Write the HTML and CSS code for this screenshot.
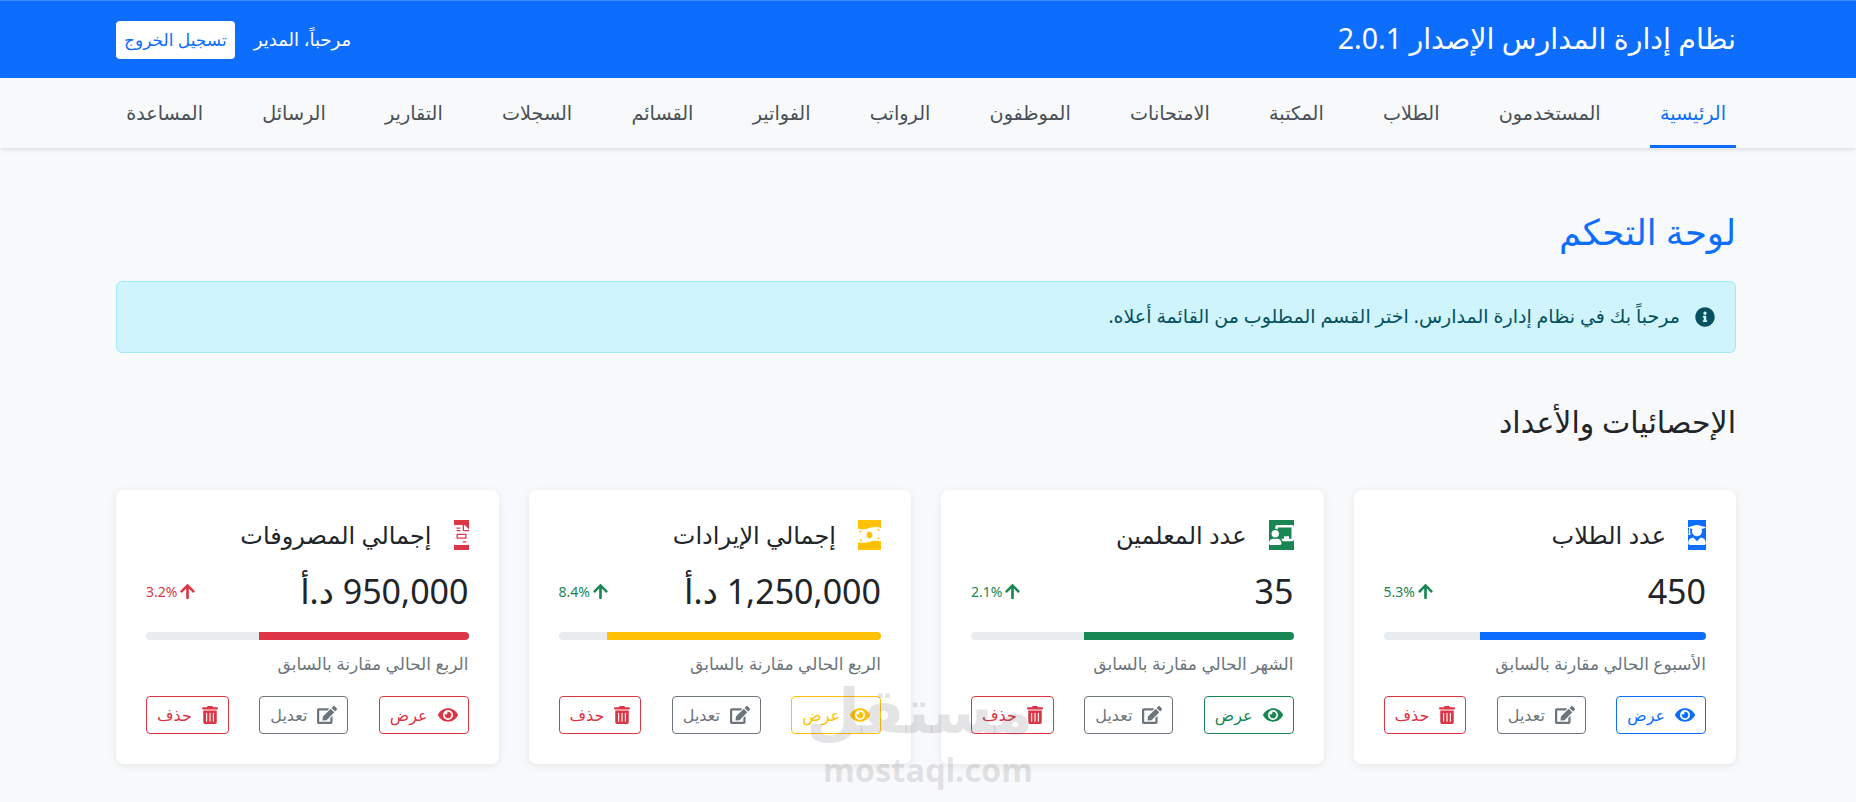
FILE: index.html
```html
<!doctype html>
<html lang="ar" dir="rtl">
  <head>
    <meta charset="UTF-8" />
    <meta name="viewport" content="width=device-width, initial-scale=1.0" />
    <title>نظام إدارة المدارس</title>
    <link rel="stylesheet" href="styles.css">
  </head>
  <body>
    <svg class="sprite" aria-hidden="true">
      <symbol id="i-eye" viewBox="0 0 576 512"><path d="M572.52 241.4C518.29 135.59 410.93 64 288 64S57.68 135.64 3.48 241.41a32.35 32.35 0 0 0 0 29.19C57.71 376.41 165.07 448 288 448s230.32-71.64 284.52-177.41a32.35 32.35 0 0 0 0-29.19zM288 400a144 144 0 1 1 144-144 143.93 143.93 0 0 1-144 144zm0-240a95.31 95.31 0 0 0-25.31 3.79 47.85 47.85 0 0 1-66.9 66.9A95.78 95.78 0 1 0 288 160z"/></symbol>
      <symbol id="i-edit" viewBox="0 0 576 512"><path d="M402.6 83.2l90.2 90.2c3.8 3.8 3.8 10 0 13.8L274.4 405.6l-92.8 10.3c-12.4 1.4-22.9-9.1-21.5-21.5l10.3-92.8L388.8 83.2c3.8-3.8 10-3.8 13.8 0zm162-22.9l-48.8-48.8c-15.2-15.2-39.9-15.2-55.2 0l-35.4 35.4c-3.8 3.8-3.8 10 0 13.8l90.2 90.2c3.8 3.8 10 3.8 13.8 0l35.4-35.4c15.2-15.3 15.2-40 0-55.2zM384 346.2V448H64V128h229.8c3.2 0 6.2-1.3 8.5-3.5l40-40c7.6-7.6 2.2-20.5-8.5-20.5H48C21.5 64 0 85.5 0 112v352c0 26.5 21.5 48 48 48h352c26.5 0 48-21.5 48-48V306.2c0-10.7-12.9-16-20.5-8.5l-40 40c-2.2 2.3-3.5 5.3-3.5 8.5z"/></symbol>
      <symbol id="i-trash" viewBox="0 0 448 512"><path d="M32 464a48 48 0 0 0 48 48h288a48 48 0 0 0 48-48V128H32zm272-256a16 16 0 0 1 32 0v224a16 16 0 0 1-32 0zm-96 0a16 16 0 0 1 32 0v224a16 16 0 0 1-32 0zm-96 0a16 16 0 0 1 32 0v224a16 16 0 0 1-32 0zM432 32H312l-9.4-18.7A24 24 0 0 0 281.1 0H166.8a23.72 23.72 0 0 0-21.4 13.3L136 32H16A16 16 0 0 0 0 48v32a16 16 0 0 0 16 16h416a16 16 0 0 0 16-16V48a16 16 0 0 0-16-16z"/></symbol>
      <symbol id="i-info" viewBox="0 0 512 512"><path d="M256 8C119.043 8 8 119.083 8 256c0 136.997 111.043 248 248 248s248-111.003 248-248C504 119.083 392.957 8 256 8zm0 110c23.196 0 42 18.804 42 42s-18.804 42-42 42-42-18.804-42-42 18.804-42 42-42zm56 254c0 6.627-5.373 12-12 12h-88c-6.627 0-12-5.373-12-12v-24c0-6.627 5.373-12 12-12h12v-64h-12c-6.627 0-12-5.373-12-12v-24c0-6.627 5.373-12 12-12h64c6.627 0 12 5.373 12 12v100h12c6.627 0 12 5.373 12 12v24z"/></symbol>
      <symbol id="i-up" viewBox="0 0 448 512"><path d="M34.9 289.5l-22.2-22.2c-9.4-9.4-9.4-24.6 0-33.9L207 39c9.4-9.4 24.6-9.4 33.9 0l194.3 194.3c9.4 9.4 9.4 24.6 0 33.9L413 289.4c-9.5 9.5-25 9.3-34.3-.4L264 168.6V456c0 13.3-10.7 24-24 24h-32c-13.3 0-24-10.7-24-24V168.6L69.2 289.1c-9.3 9.8-24.8 10-34.3.4z"/></symbol>
      <symbol id="i-student" viewBox="0 0 448 512"><path d="M319.4 320.6L224 416l-95.4-95.4C57.1 323.7 0 382.2 0 454.4v9.6c0 26.5 21.5 48 48 48h352c26.5 0 48-21.5 48-48v-9.6c0-72.2-57.1-130.7-128.6-133.8zM13.6 79.8l6.4 1.5v58.4c-7 4.2-12 11.5-12 20.3 0 8.4 4.6 15.4 11.1 19.7L3.5 242c-1.7 6.9 2.1 14 7.6 14h41.8c5.5 0 9.3-7.1 7.6-14l-15.6-62.3C51.4 175.4 56 168.4 56 160c0-8.8-5-16.1-12-20.3V87.1l66 15.9c-8.6 17.2-14 36.4-14 57 0 70.7 57.3 128 128 128s128-57.3 128-128c0-20.6-5.3-39.8-14-57l96.3-23.2c18.2-4.4 18.2-27.1 0-31.5l-190.4-46c-13-3.1-26.7-3.1-39.7 0L13.6 48.2c-18.1 4.4-18.1 27.2 0 31.6z"/></symbol>
      <symbol id="i-teacher" viewBox="0 0 640 512"><path d="M208 352c-2.39 0-4.78.35-7.06 1.09C187.98 357.3 174.35 360 160 360c-14.35 0-27.98-2.7-40.95-6.91-2.28-.74-4.66-1.09-7.05-1.09C49.94 352-.33 402.48 0 464.62.14 490.88 21.73 512 48 512h224c26.27 0 47.86-21.12 48-47.38.33-62.14-49.94-112.62-112-112.62zm-48-32c53.02 0 96-42.98 96-96s-42.98-96-96-96-96 42.98-96 96 42.98 96 96 96zM592 0H208c-26.47 0-48 22.25-48 49.59V96c23.42 0 45.1 6.78 64 17.8V64h352v288h-64v-64H384v64h-76.24c19.1 16.69 33.12 38.73 39.69 64H592c26.47 0 48-22.25 48-49.59V49.59C640 22.25 618.47 0 592 0z"/></symbol>
      <symbol id="i-money" viewBox="0 0 640 512"><path d="M621.16 54.46C582.37 38.19 543.55 32 504.75 32c-123.17-.01-246.33 62.34-369.5 62.34-30.89 0-61.76-3.92-92.65-13.72-3.47-1.1-6.95-1.62-10.35-1.62C15.04 79 0 92.32 0 110.81v317.26c0 12.63 7.23 24.6 18.84 29.46C57.63 473.81 96.45 480 135.25 480c123.17 0 246.34-62.35 369.51-62.35 30.89 0 61.76 3.92 92.65 13.72 3.47 1.1 6.95 1.62 10.35 1.62 17.21 0 32.25-13.32 32.25-31.81V83.93c-.01-12.64-7.24-24.6-18.85-29.47zM48 132.22c20.12 5.04 41.12 7.57 62.72 8.93C104.84 170.54 79 192.69 48 192.69v-60.47zm0 285v-47.78c34.37 0 62.18 27.27 63.71 61.4-22.53-1.81-43.59-6.31-63.71-13.62zM320 352c-44.19 0-80-42.99-80-96 0-53.02 35.82-96 80-96s80 42.98 80 96c0 53.03-35.83 96-80 96zm272 27.78c-17.52-4.39-35.71-6.85-54.32-8.44 5.87-26.08 27.5-45.88 54.32-49.28v57.72zm0-236.11c-30.89-3.91-54.86-29.7-55.81-61.55 19.54 2.17 38.09 6.23 55.81 12.66v48.89z"/></symbol>
      <symbol id="i-invoice" viewBox="0 0 384 512"><path d="M288 256H96v64h192v-64zm89-151L279.1 7c-4.5-4.5-10.6-7-17-7H256v128h128v-6.1c0-6.3-2.5-12.4-7-16.9zm-153 31V0H24C10.7 0 0 10.7 0 24v464c0 13.3 10.7 24 24 24h336c13.3 0 24-10.7 24-24V160H248c-13.2 0-24-10.8-24-24zM64 72c0-4.42 3.58-8 8-8h80c4.42 0 8 3.58 8 8v16c0 4.42-3.58 8-8 8H72c-4.42 0-8-3.58-8-8V72zm0 64c0-4.42 3.58-8 8-8h80c4.42 0 8 3.58 8 8v16c0 4.42-3.58 8-8 8H72c-4.42 0-8-3.58-8-8v-16zm256 304c0 4.42-3.58 8-8 8h-80c-4.42 0-8-3.58-8-8v-16c0-4.42 3.58-8 8-8h80c4.42 0 8 3.58 8 8v16zm0-200v96c0 8.84-7.16 16-16 16H80c-8.84 0-16-7.16-16-16v-96c0-8.84 7.16-16 16-16h224c8.84 0 16 7.16 16 16z"/></symbol>
    </svg>

    <header class="topbar">
      <div class="container topbar-row">
        <div class="brand">نظام إدارة المدارس الإصدار 2.0.1</div>
        <div class="user-box">
          <span>مرحباً، المدير</span>
          <a class="logout" href="#">تسجيل الخروج</a>
        </div>
      </div>
    </header>

    <nav class="mainnav">
      <div class="container nav-row">
        <a class="nav-item active" href="#">الرئيسية</a>
        <a class="nav-item" href="#">المستخدمون</a>
        <a class="nav-item" href="#">الطلاب</a>
        <a class="nav-item" href="#">المكتبة</a>
        <a class="nav-item" href="#">الامتحانات</a>
        <a class="nav-item" href="#">الموظفون</a>
        <a class="nav-item" href="#">الرواتب</a>
        <a class="nav-item" href="#">الفواتير</a>
        <a class="nav-item" href="#">القسائم</a>
        <a class="nav-item" href="#">السجلات</a>
        <a class="nav-item" href="#">التقارير</a>
        <a class="nav-item" href="#">الرسائل</a>
        <a class="nav-item" href="#">المساعدة</a>
      </div>
    </nav>

    <main class="container content">
      <h1 class="page-title">لوحة التحكم</h1>

      <div class="alert">
        <svg class="alert-icon"><use href="#i-info"/></svg>
        <span>مرحباً بك في نظام إدارة المدارس. اختر القسم المطلوب من القائمة أعلاه.</span>
      </div>

      <h2 class="section-title">الإحصائيات والأعداد</h2>

      <div class="cards">
        <section class="card blue">
          <div class="card-head">
            <span class="card-icon w18"><svg><use href="#i-student"/></svg></span>
            <h3>عدد الطلاب</h3>
          </div>
          <div class="value-row">
            <div class="value">450</div>
            <div class="trend up">
              <svg><use href="#i-up"/></svg>
              <span>5.3%</span>
            </div>
          </div>
          <div class="progress"><div class="progress-bar" style="width: 70%"></div></div>
          <p class="caption">الأسبوع الحالي مقارنة بالسابق</p>
          <div class="actions">
            <a class="btn btn-view" href="#"><svg><use href="#i-eye"/></svg>عرض</a>
            <a class="btn btn-edit" href="#"><svg><use href="#i-edit"/></svg>تعديل</a>
            <a class="btn btn-delete" href="#"><svg class="narrow"><use href="#i-trash"/></svg>حذف</a>
          </div>
        </section>

        <section class="card green">
          <div class="card-head">
            <span class="card-icon w25"><svg><use href="#i-teacher"/></svg></span>
            <h3>عدد المعلمين</h3>
          </div>
          <div class="value-row">
            <div class="value">35</div>
            <div class="trend up">
              <svg><use href="#i-up"/></svg>
              <span>2.1%</span>
            </div>
          </div>
          <div class="progress"><div class="progress-bar" style="width: 65%"></div></div>
          <p class="caption">الشهر الحالي مقارنة بالسابق</p>
          <div class="actions">
            <a class="btn btn-view" href="#"><svg><use href="#i-eye"/></svg>عرض</a>
            <a class="btn btn-edit" href="#"><svg><use href="#i-edit"/></svg>تعديل</a>
            <a class="btn btn-delete" href="#"><svg class="narrow"><use href="#i-trash"/></svg>حذف</a>
          </div>
        </section>

        <section class="card yellow">
          <div class="card-head">
            <span class="card-icon w23"><svg><use href="#i-money"/></svg></span>
            <h3>إجمالي الإيرادات</h3>
          </div>
          <div class="value-row">
            <div class="value">1,250,000 د.أ</div>
            <div class="trend up">
              <svg><use href="#i-up"/></svg>
              <span>8.4%</span>
            </div>
          </div>
          <div class="progress"><div class="progress-bar" style="width: 85%"></div></div>
          <p class="caption">الربع الحالي مقارنة بالسابق</p>
          <div class="actions">
            <a class="btn btn-view" href="#"><svg><use href="#i-eye"/></svg>عرض</a>
            <a class="btn btn-edit" href="#"><svg><use href="#i-edit"/></svg>تعديل</a>
            <a class="btn btn-delete" href="#"><svg class="narrow"><use href="#i-trash"/></svg>حذف</a>
          </div>
        </section>

        <section class="card red">
          <div class="card-head">
            <span class="card-icon w15"><svg><use href="#i-invoice"/></svg></span>
            <h3>إجمالي المصروفات</h3>
          </div>
          <div class="value-row">
            <div class="value">950,000 د.أ</div>
            <div class="trend down">
              <svg><use href="#i-up"/></svg>
              <span>3.2%</span>
            </div>
          </div>
          <div class="progress"><div class="progress-bar" style="width: 65%"></div></div>
          <p class="caption">الربع الحالي مقارنة بالسابق</p>
          <div class="actions">
            <a class="btn btn-view" href="#"><svg><use href="#i-eye"/></svg>عرض</a>
            <a class="btn btn-edit" href="#"><svg><use href="#i-edit"/></svg>تعديل</a>
            <a class="btn btn-delete" href="#"><svg class="narrow"><use href="#i-trash"/></svg>حذف</a>
          </div>
        </section>
      </div>
    </main>

    <div class="watermark">
      <div class="wm-ar">مستقل</div>
      <div class="wm-en">mostaql.com</div>
    </div>
  </body>
</html>
```

FILE: styles.css
```css
* {
  box-sizing: border-box;
}
body {
  font-family: "Noto Sans", "DejaVu Sans", sans-serif;
  margin: 0;
  background-color: #f8f9fa;
  color: #212529;
  font-size: 16px;
  line-height: 1.5;
  overflow: hidden;
  height: 802px;
  position: relative;
}
a {
  text-decoration: none;
}
.sprite {
  display: none;
}
.container {
  width: 1620px;
  margin: 0 120px 0 116px;
}

/* top bar */
.topbar {
  background: #0d6efd;
  border-top: 1px solid #3d8bfd;
  height: 78px;
  color: white;
}
.topbar-row {
  display: flex;
  justify-content: space-between;
  align-items: center;
  height: 77px;
}
.brand {
  font-size: 28.5px;
  padding-bottom: 2px;
}
.user-box {
  display: flex;
  align-items: center;
  gap: 19px;
  font-size: 18px;
}
.logout {
  background: white;
  color: #0d6efd;
  border-radius: 4px;
  font-size: 17px;
  height: 38px;
  padding: 0 8px;
  display: flex;
  align-items: center;
}

/* nav */
.mainnav {
  background: #f8f9fa;
  height: 70px;
  box-shadow: 0 2px 4px rgba(0, 0, 0, 0.1);
}
.nav-row {
  display: flex;
  justify-content: space-between;
  height: 70px;
}
.nav-item {
  color: #495057;
  font-size: 19.2px;
  padding: 3px 10px 0;
  display: flex;
  align-items: center;
  border-bottom: 3px solid transparent;
}
.nav-item.active {
  color: #0d6efd;
  border-bottom-color: #0d6efd;
}

/* page */
.content {
  padding-top: 62px;
}
.page-title {
  color: #0d6efd;
  font-size: 35.5px;
  font-weight: 400;
  line-height: 1.2;
  margin: 0 0 28px;
}
.alert {
  background: #cff4fc;
  border: 1px solid #9eeaf9;
  border-radius: 6px;
  color: #055160;
  font-size: 19px;
  height: 72px;
  padding: 0 20px;
  display: flex;
  align-items: center;
  gap: 15px;
}
.alert-icon {
  width: 20px;
  height: 20px;
  fill: #055160;
}
.section-title {
  font-size: 30px;
  font-weight: 400;
  line-height: 1.2;
  margin: 51px 0 50px;
}

/* cards */
.cards {
  display: grid;
  grid-template-columns: repeat(4, 1fr);
  gap: 30px;
}
.card {
  background: white;
  border-radius: 8px;
  box-shadow: 0 2px 8px rgba(0, 0, 0, 0.08);
  padding: 30px;
  height: 274px;
}
.card-head {
  display: flex;
  align-items: center;
  gap: 22px;
  height: 30px;
}
.card-head h3 {
  font-size: 24px;
  font-weight: 400;
  margin: 0;
}
.card-icon {
  height: 30px;
  display: flex;
  align-items: center;
  fill: white;
}
.card-icon svg {
  width: 100%;
  height: 20px;
}
.w15 {
  width: 15px;
}
.w18 {
  width: 18px;
}
.w23 {
  width: 23px;
}
.w25 {
  width: 25px;
}
.value-row {
  display: flex;
  justify-content: space-between;
  align-items: center;
  margin-top: 18px;
  height: 48px;
}
.value {
  font-size: 34px;
}
.trend {
  display: flex;
  align-items: center;
  gap: 3px;
  font-size: 14px;
}
.trend svg {
  width: 15px;
  height: 17px;
  fill: currentColor;
}
.trend.up {
  color: #198754;
}
.trend.down {
  color: #dc3545;
}
.progress {
  background: #e9ecef;
  border-radius: 4px;
  height: 8px;
  margin-top: 16px;
  overflow: hidden;
}
.progress-bar {
  height: 100%;
}
.caption {
  color: #6c757d;
  font-size: 17px;
  margin: 11px 0 0;
}
.actions {
  display: flex;
  justify-content: space-between;
  margin-top: 19.5px;
}
.btn {
  height: 38px;
  border: 1px solid;
  border-radius: 4px;
  padding: 0 10px;
  font-size: 16px;
  display: flex;
  align-items: center;
  gap: 10px;
}
.btn svg {
  width: 20px;
  height: 18px;
  fill: currentColor;
}
.btn svg.narrow {
  width: 16px;
}
.btn-edit {
  color: #6c757d;
}
.btn-delete {
  color: #dc3545;
}
.blue .card-icon, .blue .progress-bar {
  background: #0d6efd;
}
.blue .btn-view {
  color: #0d6efd;
}
.green .card-icon, .green .progress-bar {
  background: #198754;
}
.green .btn-view {
  color: #198754;
}
.yellow .card-icon, .yellow .progress-bar {
  background: #ffc107;
}
.yellow .btn-view {
  color: #ffc107;
}
.red .card-icon, .red .progress-bar {
  background: #dc3545;
}
.red .btn-view {
  color: #dc3545;
}

/* mostaql watermark over the page */
.watermark {
  position: absolute;
  left: 823px;
  top: 666px;
  width: 210px;
  text-align: center;
  color: rgba(90, 90, 100, 0.16);
  font-weight: 700;
  pointer-events: none;
}
.wm-ar {
  font-size: 62px;
  line-height: 86px;
}
.wm-en {
  font-size: 32.5px;
  line-height: 36px;
  direction: ltr;
}
```
